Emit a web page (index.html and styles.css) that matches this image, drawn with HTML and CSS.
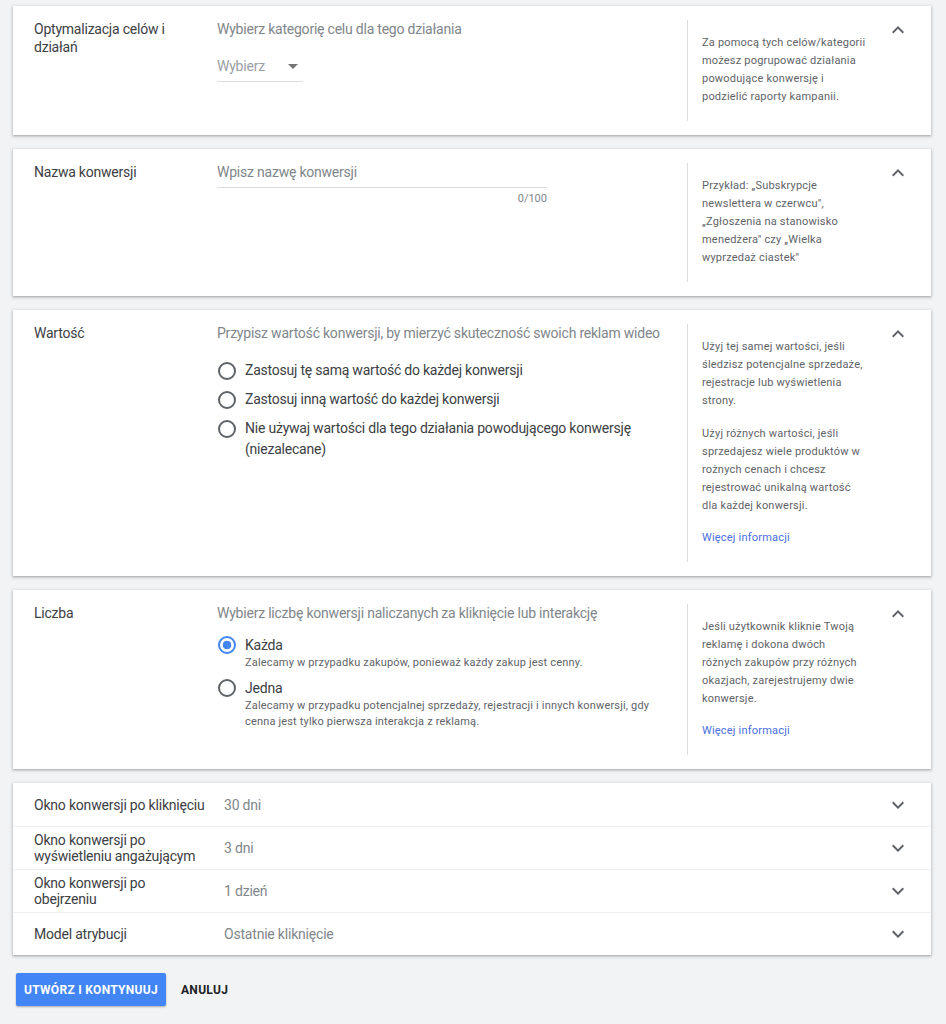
FILE: index.html
```html
<!DOCTYPE html>
<html lang="pl">
<head>
<meta charset="utf-8">
<title>Nowa konwersja</title>
<link rel="stylesheet" href="styles.css">
</head>
<body>
<main class="page">

  <section class="card">
    <div class="card-label">Optymalizacja celów i działań</div>
    <div class="card-body">
      <div class="hint">Wybierz kategorię celu dla tego działania</div>
      <div class="select">
        <span>Wybierz</span>
        <svg class="caret" viewBox="0 0 24 24" width="24" height="24"><path d="M7 10l5 5 5-5z"/></svg>
      </div>
    </div>
    <aside class="help">
      <p>Za pomocą tych celów/kategorii<br>możesz pogrupować działania<br>powodujące konwersję i<br>podzielić raporty kampanii.</p>
    </aside>
    <div class="toggle"><svg viewBox="0 0 24 24" width="24" height="24"><path d="M12 8l-6 6 1.41 1.41L12 10.83l4.59 4.58L18 14z"/></svg></div>
  </section>

  <section class="card">
    <div class="card-label">Nazwa konwersji</div>
    <div class="card-body">
      <div class="input">Wpisz nazwę konwersji</div>
      <div class="counter">0/100</div>
    </div>
    <aside class="help">
      <p>Przykład: „Subskrypcje<br>newslettera w czerwcu",<br>„Zgłoszenia na stanowisko<br>menedżera" czy „Wielka<br>wyprzedaż ciastek"</p>
    </aside>
    <div class="toggle"><svg viewBox="0 0 24 24" width="24" height="24"><path d="M12 8l-6 6 1.41 1.41L12 10.83l4.59 4.58L18 14z"/></svg></div>
  </section>

  <section class="card">
    <div class="card-label">Wartość</div>
    <div class="card-body">
      <div class="hint">Przypisz wartość konwersji, by mierzyć skuteczność swoich reklam wideo</div>
      <div class="options">
        <div class="opt"><span class="radio"></span><span>Zastosuj tę samą wartość do każdej konwersji</span></div>
        <div class="opt"><span class="radio"></span><span>Zastosuj inną wartość do każdej konwersji</span></div>
        <div class="opt"><span class="radio"></span><span>Nie używaj wartości dla tego działania powodującego konwersję<br>(niezalecane)</span></div>
      </div>
    </div>
    <aside class="help">
      <p>Użyj tej samej wartości, jeśli<br>śledzisz potencjalne sprzedaże,<br>rejestracje lub wyświetlenia<br>strony.</p>
      <p class="para">Użyj różnych wartości, jeśli<br>sprzedajesz wiele produktów w<br>rożnych cenach i chcesz<br>rejestrować unikalną wartość<br>dla każdej konwersji.</p>
      <p class="more"><a href="#">Więcej informacji</a></p>
    </aside>
    <div class="toggle"><svg viewBox="0 0 24 24" width="24" height="24"><path d="M12 8l-6 6 1.41 1.41L12 10.83l4.59 4.58L18 14z"/></svg></div>
  </section>

  <section class="card">
    <div class="card-label">Liczba</div>
    <div class="card-body">
      <div class="hint">Wybierz liczbę konwersji naliczanych za kliknięcie lub interakcję</div>
      <div class="choices">
        <div class="choice">
          <span class="radio on"></span>
          <div>
            <div class="choice-title">Każda</div>
            <div class="choice-desc">Zalecamy w przypadku zakupów, ponieważ każdy zakup jest cenny.</div>
          </div>
        </div>
        <div class="choice">
          <span class="radio"></span>
          <div>
            <div class="choice-title">Jedna</div>
            <div class="choice-desc">Zalecamy w przypadku potencjalnej sprzedaży, rejestracji i innych konwersji, gdy<br>cenna jest tylko pierwsza interakcja z reklamą.</div>
          </div>
        </div>
      </div>
    </div>
    <aside class="help">
      <p>Jeśli użytkownik kliknie Twoją<br>reklamę i dokona dwóch<br>różnych zakupów przy różnych<br>okazjach, zarejestrujemy dwie<br>konwersje.</p>
      <p class="more"><a href="#">Więcej informacji</a></p>
    </aside>
    <div class="toggle"><svg viewBox="0 0 24 24" width="24" height="24"><path d="M12 8l-6 6 1.41 1.41L12 10.83l4.59 4.58L18 14z"/></svg></div>
  </section>

  <section class="list">
    <div class="row">
      <div class="row-label">Okno konwersji po kliknięciu</div>
      <div class="row-value">30 dni</div>
      <div class="toggle row-toggle"><svg viewBox="0 0 24 24" width="24" height="24"><path d="M16.59 8.59L12 13.17 7.41 8.59 6 10l6 6 6-6z"/></svg></div>
    </div>
    <div class="row">
      <div class="row-label">Okno konwersji po<br>wyświetleniu angażującym</div>
      <div class="row-value">3 dni</div>
      <div class="toggle row-toggle"><svg viewBox="0 0 24 24" width="24" height="24"><path d="M16.59 8.59L12 13.17 7.41 8.59 6 10l6 6 6-6z"/></svg></div>
    </div>
    <div class="row">
      <div class="row-label">Okno konwersji po<br>obejrzeniu</div>
      <div class="row-value">1 dzień</div>
      <div class="toggle row-toggle"><svg viewBox="0 0 24 24" width="24" height="24"><path d="M16.59 8.59L12 13.17 7.41 8.59 6 10l6 6 6-6z"/></svg></div>
    </div>
    <div class="row">
      <div class="row-label">Model atrybucji</div>
      <div class="row-value">Ostatnie kliknięcie</div>
      <div class="toggle row-toggle"><svg viewBox="0 0 24 24" width="24" height="24"><path d="M16.59 8.59L12 13.17 7.41 8.59 6 10l6 6 6-6z"/></svg></div>
    </div>
  </section>

  <div class="actions">
    <button class="btn-primary" type="button">UTWÓRZ I KONTYNUUJ</button>
    <button class="btn-text" type="button">ANULUJ</button>
  </div>

</main>
</body>
</html>
```

FILE: styles.css
```css
* { box-sizing: border-box; }
html, body { margin: 0; }
body {
  background: #f1f3f4;
  font-family: Roboto, "Noto Sans", Arial, sans-serif;
  color: #3c4043;
}
p { margin: 0; }

.page {
  padding: 6px 15px 20px 13px;
  display: flex;
  flex-direction: column;
  gap: 14px;
}

.card {
  background: #fff;
  display: flex;
  align-items: flex-start;
  padding: 14px 0 14px 21px;
  box-shadow: 0 1px 2px rgba(60, 64, 67, .3), 0 1px 3px 1px rgba(60, 64, 67, .15);
}

.card-label {
  width: 183px;
  flex: none;
  padding-right: 25px;
  font-size: 14px;
  line-height: 18px;
  letter-spacing: -.22px;
  color: #3c4043;
}

.card-body {
  flex: 1;
  min-width: 0;
  padding-right: 16px;
}

.hint {
  font-size: 14px;
  line-height: 18px;
  letter-spacing: -.22px;
  color: #80868b;
}

.select {
  margin-top: 19px;
  width: 86px;
  display: flex;
  align-items: center;
  justify-content: space-between;
  padding-bottom: 6px;
  border-bottom: 1px solid #dadce0;
  font-size: 14px;
  line-height: 18px;
  letter-spacing: -.22px;
  color: #9aa0a6;
}
.caret { fill: #757575; margin: -3px -2px -3px 0; }

.input {
  width: 330px;
  font-size: 14px;
  line-height: 18px;
  letter-spacing: -.22px;
  color: #80868b;
  padding-bottom: 6px;
  border-bottom: 1px solid #dadce0;
}
.counter {
  width: 330px;
  text-align: right;
  margin-top: 4px;
  font-size: 11px;
  line-height: 14px;
  color: #80868b;
}

.help {
  align-self: stretch;
  flex: none;
  width: 187px;
  border-left: 1px solid #dadce0;
  padding: 14px 0 15px 14px;
  font-size: 11px;
  line-height: 18px;
  color: #5f6368;
  letter-spacing: .2px;
  white-space: nowrap;
}
.help .para { margin-top: 15px; }
.help .more { margin-top: 14px; }
.help a { color: #4a6ee0; text-decoration: none; }

.toggle {
  flex: none;
  width: 57px;
  padding-left: 12px;
  margin-top: -2px;
  display: flex;
}
.toggle svg { fill: #5f6368; }

/* radios */
.radio {
  flex: none;
  width: 18px;
  height: 18px;
  border: 2px solid #5f6368;
  border-radius: 50%;
  margin-left: 1px;
}
.radio.on {
  border-color: #4285f4;
  background: radial-gradient(circle, #4285f4 0 4px, transparent 4.6px);
}

.options {
  margin-top: 18px;
  display: flex;
  flex-direction: column;
  gap: 8px;
}
.opt {
  display: flex;
  align-items: flex-start;
  gap: 9px;
  font-size: 14px;
  line-height: 21px;
  letter-spacing: -.22px;
  color: #3c4043;
}
.opt .radio { margin-top: 1.5px; }

.choices {
  margin-top: 13px;
  display: flex;
  flex-direction: column;
  gap: 7px;
}
.choice {
  display: flex;
  align-items: flex-start;
  gap: 9px;
}
.choice .radio { margin-top: 1px; }
.choice-title {
  font-size: 14px;
  line-height: 20px;
  letter-spacing: -.22px;
  color: #3c4043;
}
.choice-desc {
  font-size: 11px;
  line-height: 16px;
  letter-spacing: .17px;
  color: #5f6368;
}

/* collapsed list */
.list {
  background: #fff;
  box-shadow: 0 1px 2px rgba(60, 64, 67, .3), 0 1px 3px 1px rgba(60, 64, 67, .15);
}
.row {
  display: flex;
  align-items: center;
  height: 43px;
  padding-left: 21px;
  border-top: 1px solid #eef0f1;
}
.row:first-child { border-top: 0; }
.row-label {
  width: 190px;
  flex: none;
  font-size: 14px;
  line-height: 16px;
  letter-spacing: -.2px;
  color: #3c4043;
}
.row-value {
  flex: 1;
  font-size: 14px;
  letter-spacing: -.2px;
  color: #80868b;
}
.row-toggle { margin-top: 0; }

/* actions */
.actions {
  margin-top: 4px;
  padding-left: 3px;
  display: flex;
  align-items: center;
  gap: 7px;
}
.btn-primary {
  width: 150px;
  height: 33px;
  border: 0;
  border-radius: 2px;
  background: #4285f4;
  color: #fff;
  font-family: inherit;
  font-size: 12px;
  font-weight: 700;
  letter-spacing: .3px;
  box-shadow: 0 1px 2px rgba(0, 0, 0, .3);
  padding: 0;
}
.btn-text {
  border: 0;
  background: transparent;
  color: #202124;
  font-family: inherit;
  font-size: 12px;
  font-weight: 700;
  letter-spacing: .3px;
  padding: 0 8px;
  height: 33px;
}
```
